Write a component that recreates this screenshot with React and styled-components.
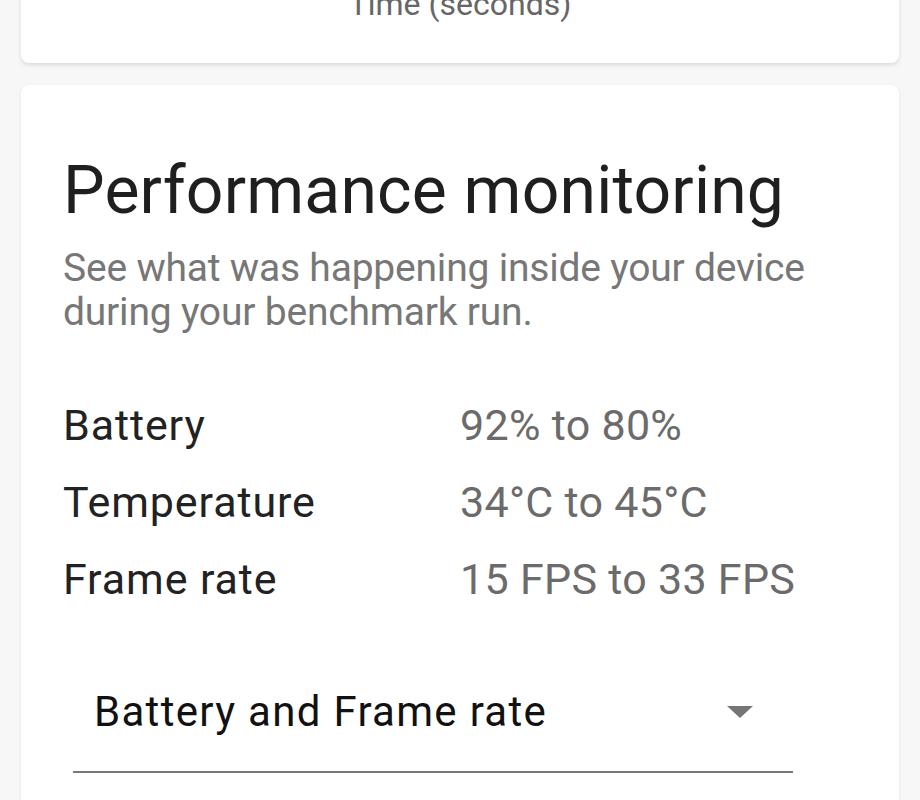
import React from "react";
import styled, { createGlobalStyle } from "styled-components";

const GlobalStyle = createGlobalStyle`
  html, body {
    margin: 0;
    padding: 0;
    background: #f7f7f7;
    font-family: Roboto, "Noto Sans", sans-serif;
    overflow: hidden;
  }
`;

const stats = [
  { label: "Battery", value: "92% to 80%" },
  { label: "Temperature", value: "34°C to 45°C" },
  { label: "Frame rate", value: "15 FPS to 33 FPS" },
];

function App() {
  return (
    <Page>
      <GlobalStyle />
      <ChartCard>
        <AxisLabel>Time (seconds)</AxisLabel>
      </ChartCard>

      <Card>
        <Title>Performance monitoring</Title>
        <Subtitle>
          See what was happening inside your device during your benchmark run.
        </Subtitle>

        <StatList>
          {stats.map((s) => (
            <StatRow key={s.label}>
              <StatLabel>{s.label}</StatLabel>
              <StatValue>{s.value}</StatValue>
            </StatRow>
          ))}
        </StatList>

        <Select>
          <SelectText>Battery and Frame rate</SelectText>
          <Arrow />
        </Select>
      </Card>
    </Page>
  );
}

export default App;

const Page = styled.div`
  display: flex;
  flex-direction: column;
  gap: 22px;
  padding: 0 21px;
  margin-top: -40px;
  height: 840px;
`;

const ChartCard = styled.div`
  background: #fff;
  border-radius: 0 0 8px 8px;
  box-shadow: 0 2px 4px rgba(0, 0, 0, 0.12);
  height: 103px;
  flex-shrink: 0;
  display: flex;
  justify-content: center;
`;

const AxisLabel = styled.div`
  font-size: 32px;
  line-height: 1;
  color: #666;
  margin-top: 28px;
`;

const Card = styled.div`
  flex: 1;
  background: #fff;
  border-radius: 8px 8px 0 0;
  box-shadow: 0 1px 3px rgba(0, 0, 0, 0.1);
  padding: 66px 42px 0;
`;

const Title = styled.h1`
  margin: 0;
  font-size: 66px;
  font-weight: 400;
  line-height: 1.2;
  letter-spacing: 0.2px;
  color: #1f1f1f;
`;

const Subtitle = styled.p`
  margin: 16px 0 0;
  font-size: 39px;
  line-height: 44px;
  letter-spacing: -0.2px;
  color: #777;
`;

const StatList = styled.div`
  margin-top: 67px;
  display: flex;
  flex-direction: column;
  gap: 29px;
`;

const StatRow = styled.div`
  display: grid;
  grid-template-columns: 397px 1fr;
  font-size: 43px;
  line-height: 48px;
`;

const StatLabel = styled.span`
  color: #222;
  letter-spacing: 0.9px;
`;

const StatValue = styled.span`
  color: #6b6b6b;
  letter-spacing: 0.3px;
`;

const Select = styled.div`
  margin: 85px 64px 0 10px;
  display: flex;
  align-items: center;
  justify-content: space-between;
  padding: 0 40px 35px 21px;
  border-bottom: 2px solid #777;
`;

const SelectText = styled.span`
  font-size: 42px;
  line-height: 48px;
  letter-spacing: 1.3px;
  color: #111;
`;

const Arrow = styled.span`
  width: 0;
  height: 0;
  border-left: 13px solid transparent;
  border-right: 13px solid transparent;
  border-top: 12px solid #757575;
`;
